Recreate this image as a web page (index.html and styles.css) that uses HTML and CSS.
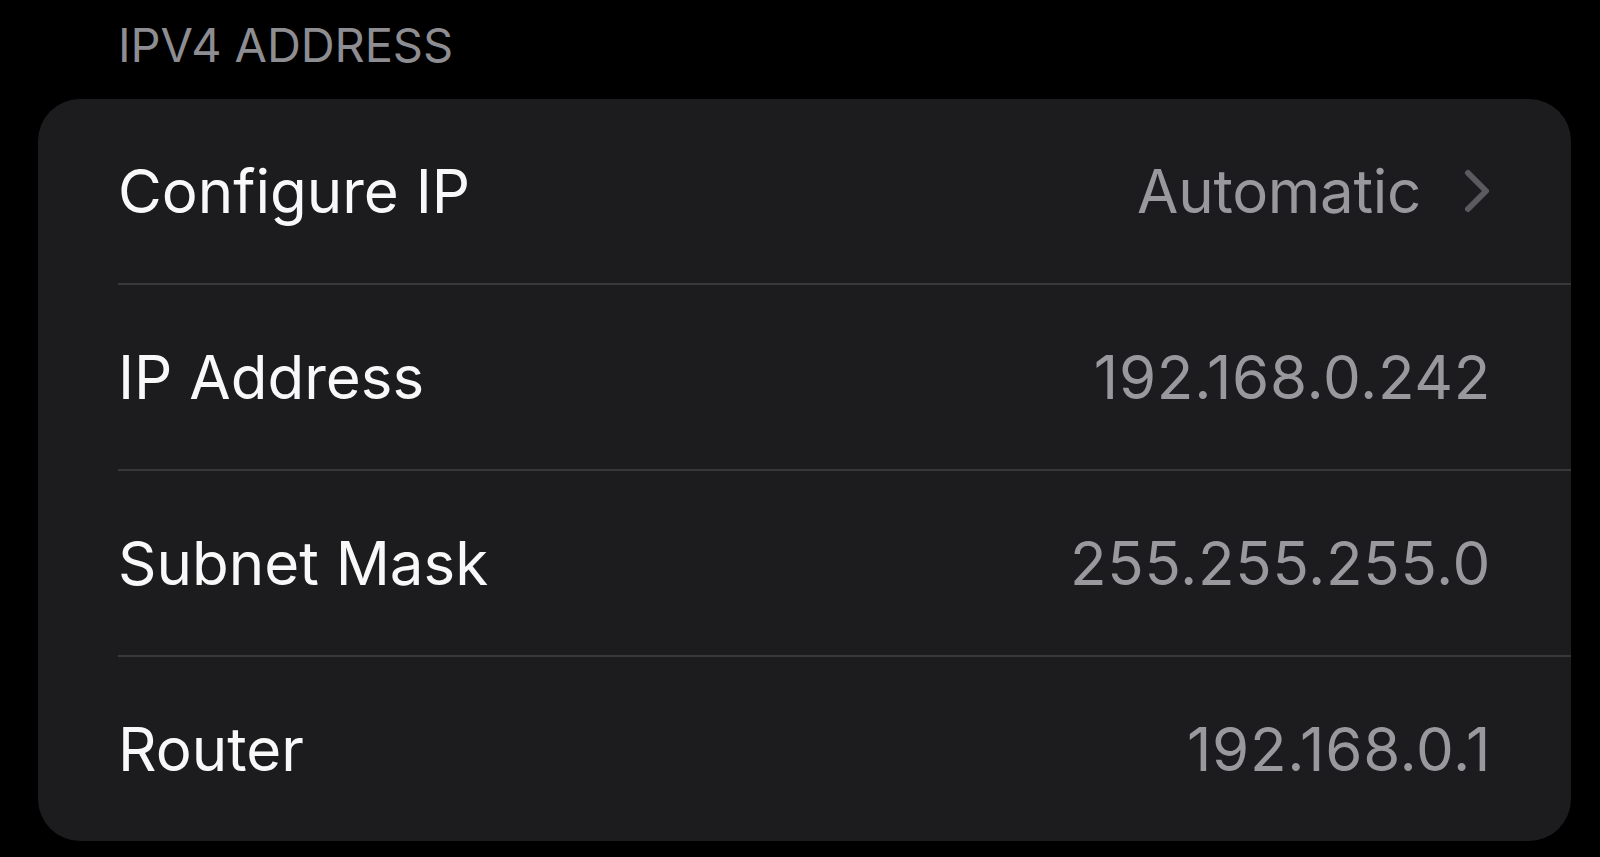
FILE: index.html
```html
<!DOCTYPE html>
<html lang="en">
<head>
<meta charset="utf-8">
<title>IPv4 Address</title>
<link rel="stylesheet" href="styles.css">
</head>
<body>
<main class="page">
  <h2 class="section-header">IPV4 ADDRESS</h2>
  <section class="card">
    <div class="row">
      <span class="label">Configure IP</span>
      <span class="value-group">
        <span class="value">Automatic</span>
        <svg class="chevron" viewBox="0 0 26 44" width="26" height="44" aria-hidden="true">
          <polyline points="4,4 22,22 4,40" fill="none" stroke="currentColor" stroke-width="6" stroke-linecap="round" stroke-linejoin="round"/>
        </svg>
      </span>
    </div>
    <div class="row">
      <span class="label">IP Address</span>
      <span class="value numeric">192.168.0.242</span>
    </div>
    <div class="row">
      <span class="label">Subnet Mask</span>
      <span class="value numeric">255.255.255.0</span>
    </div>
    <div class="row">
      <span class="label">Router</span>
      <span class="value numeric">192.168.0.1</span>
    </div>
  </section>
</main>
</body>
</html>
```

FILE: styles.css
```css
* {
  box-sizing: border-box;
}

html, body {
  margin: 0;
  padding: 0;
  background: #000;
  height: 100%;
}

body {
  font-family: Inter, "Noto Sans", "Liberation Sans", sans-serif;
  color: #fff;
  overflow: hidden;
}

.page {
  display: flex;
  flex-direction: column;
  padding: 0 29px 0 38px;
}

.section-header {
  margin: 0;
  padding: 21px 0 0 80px;
  height: 99px;
  font-size: 47px;
  line-height: 47px;
  font-weight: 400;
  color: #8d8d92;
  letter-spacing: -0.1px;
}

.card {
  background: #1c1c1e;
  border-radius: 42px;
  overflow: hidden;
  display: flex;
  flex-direction: column;
  padding-left: 80px;
}

.row {
  display: flex;
  align-items: center;
  justify-content: space-between;
  height: 186px;
  padding-right: 81px;
  border-bottom: 2px solid #38383a;
}

.row:last-child {
  height: 184px;
  border-bottom: none;
}

.label {
  font-size: 60px;
  color: #f8f8f8;
  letter-spacing: 0;
}

.value {
  font-size: 60px;
  color: #98989d;
  letter-spacing: -0.3px;
}

.numeric {
  letter-spacing: 0.7px;
  margin-right: -1px;
}

.value-group {
  display: flex;
  align-items: center;
  gap: 43px;
}

.chevron {
  display: block;
  color: #5a5a5f;
}
```
